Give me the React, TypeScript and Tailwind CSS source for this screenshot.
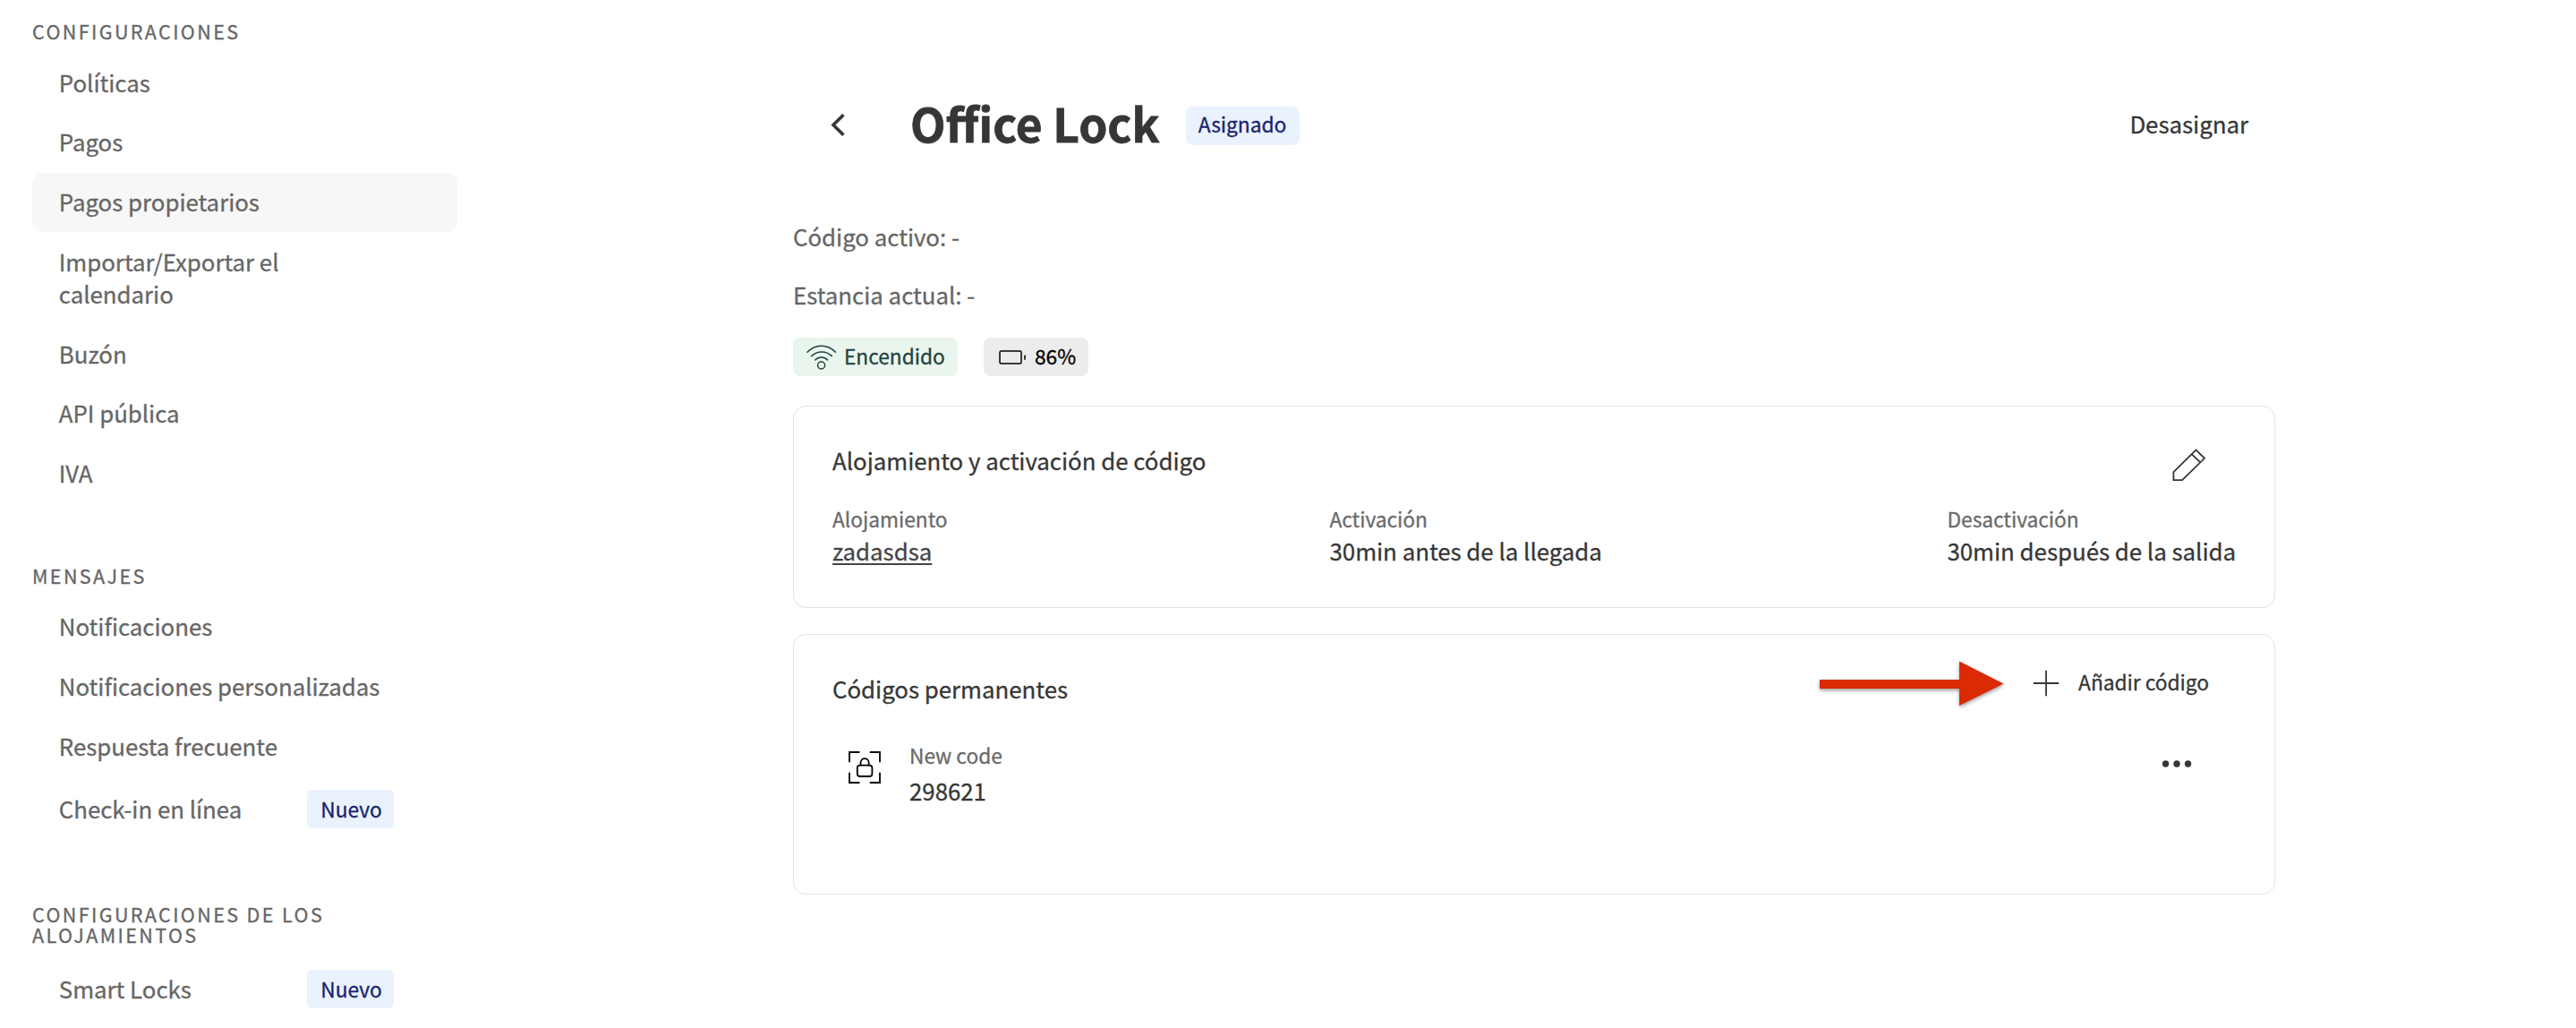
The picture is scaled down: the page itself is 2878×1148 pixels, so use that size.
type MenuItem = {
  label: string;
  active?: boolean;
  isNew?: boolean;
};

type MenuSection = {
  title: string;
  items: MenuItem[];
};

const sections: MenuSection[] = [
  {
    title: 'Configuraciones',
    items: [
      { label: 'Políticas' },
      { label: 'Pagos' },
      { label: 'Pagos propietarios', active: true },
      { label: 'Importar/Exportar el\ncalendario' },
      { label: 'Buzón' },
      { label: 'API pública' },
      { label: 'IVA' },
    ],
  },
  {
    title: 'Mensajes',
    items: [
      { label: 'Notificaciones' },
      { label: 'Notificaciones personalizadas' },
      { label: 'Respuesta frecuente' },
      { label: 'Check-in en línea', isNew: true },
    ],
  },
  {
    title: 'Configuraciones de los\nalojamientos',
    items: [{ label: 'Smart Locks', isNew: true }],
  },
];

function WifiIcon() {
  return (
    <svg width="34" height="28" viewBox="0 0 34 28" fill="none" stroke="currentColor" strokeWidth="1.5" strokeLinecap="round">
      <path d="M1 8.3C10 -1.2 23.5 -1.2 32.5 8.3" />
      <path d="M5.8 12.6C12 6.5 22 6.5 28.3 12.6" />
      <path d="M9.8 17C13.5 13 20 13 23.5 17" />
      <circle cx="16.6" cy="23" r="4" />
    </svg>
  );
}

function BatteryIcon() {
  return (
    <svg width="30" height="16" viewBox="0 0 30 16" fill="none" stroke="currentColor" strokeWidth="1.5" strokeLinecap="round">
      <rect x="1" y="1" width="24" height="14" rx="1.5" />
      <path d="M29 6.2V10.2" />
    </svg>
  );
}

function PencilIcon() {
  return (
    <svg width="37" height="37" viewBox="0 0 37 37" fill="none" stroke="currentColor" strokeWidth="1.8">
      <path d="M26.4 1.4L36 10.8L11 35.2H1.4V26.2Z" />
      <path d="M21.6 6.2L31 15.2" />
    </svg>
  );
}

function LockIcon() {
  return (
    <svg width="36" height="36" viewBox="0 0 36 36" fill="none" stroke="currentColor" strokeWidth="1.8" strokeLinecap="round">
      <path d="M1 11.5V1H11.8M24.5 1H35V11.5M35 24.5V35H24.5M11.8 35H1V24.5" />
      <rect x="9.8" y="15.6" width="16.6" height="12.4" rx="3" />
      <path d="M13.5 15.4V13C13.5 6.4 22.7 6.4 22.7 13V15.4" />
    </svg>
  );
}

function NewBadge() {
  return (
    <span className="flex h-[43px] w-[97px] items-center justify-center rounded-md bg-[#eaf2fe] pl-0.5 text-[22.7px] text-[#18226e]">
      Nuevo
    </span>
  );
}

function Sidebar() {
  return (
    <aside className="flex w-[475px] flex-col gap-[69px]">
      {sections.map((section) => (
        <nav key={section.title}>
          <h2 className="mb-[13px] whitespace-pre-line text-[21.5px] leading-[23px] tracking-[2.4px] uppercase">
            {section.title}
          </h2>
          <ul className="flex flex-col gap-[0.8px]">
            {section.items.map((item) => (
              <li
                key={item.label}
                className={`flex items-center justify-between rounded-xl pr-[71px] pl-[29.8px] ${
                  item.isNew ? 'py-[15px]' : 'pt-[14.5px] pb-[15.5px]'
                } ${item.active ? 'bg-[#f7f7f7]' : ''}`}
              >
                <span className={`whitespace-pre-line leading-9 ${item.isNew ? 'pb-0.5' : ''}`}>{item.label}</span>
                {item.isNew && <NewBadge />}
              </li>
            ))}
          </ul>
        </nav>
      ))}
    </aside>
  );
}

function Field({ label, value, link }: { label: string; value: string; link?: boolean }) {
  return (
    <div className="leading-9 whitespace-nowrap">
      <p className="pt-px text-[22.7px] text-[#6a6a6a]">{label}</p>
      <p className={link ? '-mt-px text-[#444] underline decoration-2 underline-offset-[3px]' : '-mt-px'}>{value}</p>
    </div>
  );
}

export default function App() {
  return (
    <div className="flex h-[1148px] w-[2878px] overflow-hidden bg-white pl-9 text-[25.8px] text-[#666] font-['Noto_Sans_CJK_SC','Open_Sans',sans-serif] [-webkit-text-stroke:0.3px]">
      <div className="pt-[23px]">
        <Sidebar />
      </div>

      <main className="ml-[375px] w-[1656px] pt-[102px]">
        {/* Header */}
        <header className="flex h-[76px] items-center pr-[30px] pl-[42px]">
          <svg width="16" height="25" viewBox="0 0 16 25" fill="none" stroke="#363636" strokeWidth="3.6" className="mb-px">
            <path d="M14.4 1.2L3 12.5L14.4 23.8" />
          </svg>
          <h1 className="ml-[73px] pb-[7px] text-[51.4px] leading-none font-bold text-[#363636] [-webkit-text-stroke:0.8px]">
            Office Lock
          </h1>
          <span className="ml-[29px] flex h-[43px] w-[127px] items-center justify-center rounded-lg bg-[#eaf2fe] pb-px text-[22.7px] text-[#18226e]">
            Asignado
          </span>
          <button className="ml-auto pb-1 text-[#363636]">Desasignar</button>
        </header>

        {/* Lock status */}
        <div className="mt-[67.5px] flex flex-col gap-[29px] leading-9">
          <p>Código activo: -</p>
          <p>Estancia actual: -</p>
        </div>
        <div className="mt-[30.5px] flex gap-[29px] text-[22.7px] leading-10">
          <div className="flex h-[43px] w-[184px] items-center gap-2 rounded-lg bg-[#eaf6ed] pl-[15px] text-[#22423f]">
            <WifiIcon />
            <span className="pb-px">Encendido</span>
          </div>
          <div className="flex h-[43px] w-[117px] items-center gap-2.5 rounded-lg bg-[#ececec] pl-[17px] text-black">
            <BatteryIcon />
            <span className="pb-px">86%</span>
          </div>
        </div>

        {/* Property and activation */}
        <section className="mt-[33px] h-[226px] rounded-[14px] border border-[#e4e4e4] px-[43px] pt-[42px] text-[#363636]">
          <div className="flex h-9 items-start justify-between">
            <h3 className="leading-9">Alojamiento y activación de código</h3>
            <button className="mt-[5px] mr-[34px]">
              <PencilIcon />
            </button>
          </div>
          <div className="mt-[29px] grid grid-cols-[555.5px_1fr_auto]">
            <Field label="Alojamiento" value="zadasdsa" link />
            <Field label="Activación" value="30min antes de la llegada" />
            <Field label="Desactivación" value="30min después de la salida" />
          </div>
        </section>

        {/* Permanent codes */}
        <section className="relative mt-[29px] h-[291px] rounded-[14px] border border-[#e4e4e4] px-[43px] pt-[34px] text-[#363636]">
          <div className="flex items-start justify-between leading-9">
            <h3 className="pt-2">Códigos permanentes</h3>
            <button className="mt-px mr-[30px] flex items-center gap-[21px] text-[22.7px]">
              <svg width="30" height="30" viewBox="0 0 30 30" className="mt-px" stroke="currentColor" strokeWidth="1.8">
                <path d="M0.8 15H29.2M15 0.8V29.2" />
              </svg>
              Añadir código
            </button>
          </div>
          <div className="mt-[38px] flex items-start">
            <div className="mt-3.5 ml-[18px] text-black">
              <LockIcon />
            </div>
            <div className="mt-px ml-8 flex flex-col gap-[3px] leading-9">
              <p className="text-[22.7px] text-[#6a6a6a]">New code</p>
              <p>298621</p>
            </div>
            <button className="mt-6 mr-[49px] ml-auto">
              <svg width="34" height="8" viewBox="0 0 34 8" fill="currentColor">
                <circle cx="4.5" cy="4" r="3.7" />
                <circle cx="17" cy="4" r="3.7" />
                <circle cx="29.5" cy="4" r="3.7" />
              </svg>
            </button>
          </div>

          {/* Callout arrow */}
          <svg
            className="absolute top-[29px] left-[1146px] drop-shadow-[0_2px_2px_rgba(0,0,0,0.4)]"
            width="206"
            height="52"
            viewBox="0 0 206 52"
            fill="#dc2a04"
          >
            <path d="M0 21H156V0.5L205.5 25.5L156 50V31H0Z" />
          </svg>
        </section>
      </main>
    </div>
  );
}
